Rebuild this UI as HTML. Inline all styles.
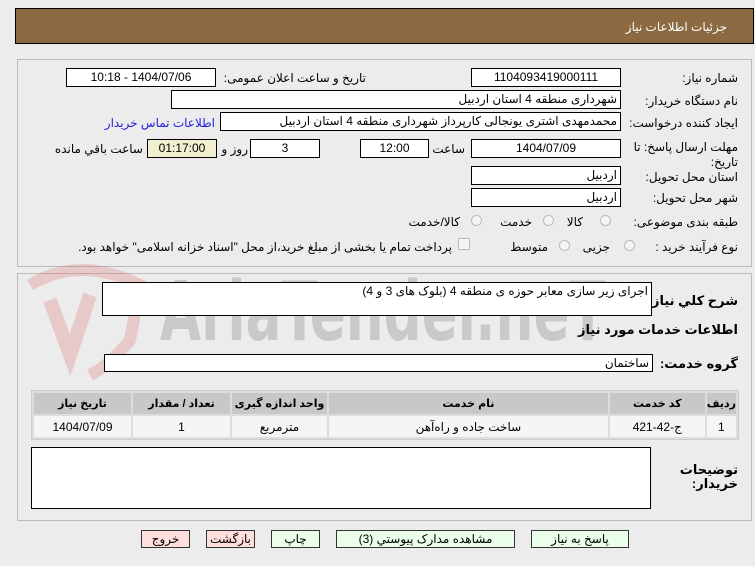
<!DOCTYPE html>
<html><head><meta charset="utf-8"><style>
body{margin:0;width:755px;height:566px;background:#ececec;font-family:"Liberation Sans","DejaVu Sans",sans-serif;font-size:12px;position:relative;overflow:hidden;color:#000}
.a{position:absolute}
.box{position:absolute;background:#fff;border:1px solid #000;box-sizing:border-box;height:19px;line-height:17px;font-size:12px;direction:rtl;padding:0 3px;white-space:nowrap}
.c{text-align:center}
.l{position:absolute;direction:rtl;white-space:nowrap;font-size:12px}
.panel{position:absolute;border:1px solid #bbb;box-sizing:border-box}
.rad{position:absolute;width:11px;height:11px;border-radius:50%;border:1px solid #bbb;background:#f4f4f4;box-sizing:border-box}
.btn{position:absolute;height:18px;border:1px solid #333;box-sizing:border-box;text-align:center;line-height:16px;font-size:12px;background:#eaffea}
.red{background:#ffdede}
table{border-collapse:separate;border-spacing:2px;position:absolute;left:31px;top:390px;width:708px;background:#ddd;border:1px solid #ccc;direction:rtl}
th{background:#c8c8c8;height:21px;font-size:11px;padding:0;white-space:nowrap}
td{background:#f5f5f5;height:21px;text-align:center;font-size:12px;padding:0}
</style></head><body>
<div class="a" style="left:15px;top:8px;width:739px;height:36px;background:#8b6a42;border:1px solid #000;box-sizing:border-box"></div>
<div class="l" style="right:28px;top:20px;color:#fff">جزئیات اطلاعات نیاز</div>

<div class="panel" style="left:17px;top:59px;width:735px;height:208px"></div>
<div class="panel" style="left:17px;top:273px;width:735px;height:248px"></div>

<svg class="a" style="left:15px;top:255px" width="140" height="140"><path d="M15 30 Q65 0 125 30 L115 85 Q95 110 75 120" fill="none" stroke="rgba(220,120,120,0.3)" stroke-width="12"/><path d="M35 45 L55 100 L75 40" fill="none" stroke="rgba(220,120,120,0.3)" stroke-width="14"/></svg>
<div class="a" style="left:160px;top:272px;font-size:82px;font-weight:bold;color:rgba(150,150,150,0.4);font-family:'DejaVu Sans Condensed','Liberation Sans Narrow',sans-serif;line-height:1;transform:scaleX(0.72);transform-origin:left top;white-space:nowrap">AriaTender.neT</div>

<div class="l" style="right:17px;top:71px">شماره نیاز:</div>
<div class="box c" style="left:471px;top:68px;width:150px">1104093419000111</div>
<div class="l" style="right:389px;top:71px">تاریخ و ساعت اعلان عمومی:</div>
<div class="box c" style="left:66px;top:68px;width:150px">1404/07/06 - 10:18</div>
<div class="l" style="right:17px;top:94px">نام دستگاه خریدار:</div>
<div class="box" style="left:171px;top:90px;width:450px">شهرداری منطقه 4 استان اردبیل</div>
<div class="l" style="right:17px;top:116px">ایجاد کننده درخواست:</div>
<div class="box" style="left:220px;top:112px;width:401px">محمدمهدی اشتری یونجالی کارپرداز شهرداری منطقه 4 استان اردبیل</div>
<div class="l" style="right:540px;top:116px;color:#2222dd">اطلاعات تماس خریدار</div>
<div class="l" style="right:17px;top:140px;line-height:15px;text-align:right">مهلت ارسال پاسخ: تا<br>تاریخ:</div>
<div class="box c" style="left:471px;top:139px;width:150px">1404/07/09</div>
<div class="l" style="right:290px;top:142px">ساعت</div>
<div class="box c" style="left:360px;top:139px;width:69px">12:00</div>
<div class="box c" style="left:250px;top:139px;width:70px">3</div>
<div class="l" style="right:507px;top:142px">روز و</div>
<div class="box c" style="left:147px;top:139px;width:70px;background:#f0f0d0">01:17:00</div>
<div class="l" style="right:612px;top:142px">ساعت باقي مانده</div>
<div class="l" style="right:17px;top:170px">استان محل تحویل:</div>
<div class="box" style="left:471px;top:166px;width:150px">اردبیل</div>
<div class="l" style="right:17px;top:191px">شهر محل تحویل:</div>
<div class="box" style="left:471px;top:188px;width:150px">اردبیل</div>
<div class="l" style="right:17px;top:215px">طبقه بندی موضوعی:</div>
<div class="rad" style="left:600px;top:215px"></div><div class="l" style="right:172px;top:215px">کالا</div>
<div class="rad" style="left:543px;top:215px"></div><div class="l" style="right:223px;top:215px">خدمت</div>
<div class="rad" style="left:471px;top:215px"></div><div class="l" style="right:295px;top:215px">کالا/خدمت</div>
<div class="l" style="right:17px;top:240px">نوع فرآیند خرید :</div>
<div class="rad" style="left:624px;top:240px"></div><div class="l" style="right:145px;top:240px">جزیی</div>
<div class="rad" style="left:559px;top:240px"></div><div class="l" style="right:207px;top:240px">متوسط</div>
<div class="a" style="left:458px;top:238px;width:12px;height:12px;border:1px solid #bbb;background:#f4f4f4;box-sizing:border-box"></div>
<div class="l" style="right:303px;top:240px">پرداخت تمام یا بخشی از مبلغ خرید،از محل "اسناد خزانه اسلامی" خواهد بود.</div>

<div class="l" style="right:17px;top:293px;font-weight:bold;font-size:13px">شرح كلي نياز:</div>
<div class="box" style="left:102px;top:282px;width:550px;height:34px;background:#fff">اجرای زیر سازی معابر حوزه ی منطقه 4 (بلوک های 3 و 4)</div>
<div class="l" style="right:17px;top:322px;font-weight:bold;font-size:13px">اطلاعات خدمات مورد نیاز</div>
<div class="l" style="right:17px;top:356px;font-weight:bold;font-size:13px">گروه خدمت:</div>
<div class="box" style="left:104px;top:354px;width:549px;height:18px;line-height:16px">ساختمان</div>
<table>
<tr><th style="width:26px">رديف</th><th style="width:95px">کد خدمت</th><th>نام خدمت</th><th style="width:95px">واحد اندازه گيری</th><th style="width:97px">تعداد / مقدار</th><th style="width:97px">تاریخ نیاز</th></tr>
<tr><td>1</td><td>ج-42-421</td><td>ساخت جاده و راه‌آهن</td><td>مترمربع</td><td>1</td><td>1404/07/09</td></tr>
</table>
<div class="l" style="right:17px;top:463px;font-weight:bold;font-size:13px;line-height:14px;text-align:right">توضیحات<br>خریدار:</div>
<div class="box" style="left:31px;top:447px;width:620px;height:62px"></div>

<div class="btn red" style="left:141px;top:530px;width:49px">خروج</div>
<div class="btn red" style="left:206px;top:530px;width:49px">بازگشت</div>
<div class="btn" style="left:271px;top:530px;width:49px">چاپ</div>
<div class="btn" style="left:336px;top:530px;width:179px">مشاهده مدارک پیوستي (3)</div>
<div class="btn" style="left:531px;top:530px;width:98px">پاسخ به نیاز</div>
</body></html>
